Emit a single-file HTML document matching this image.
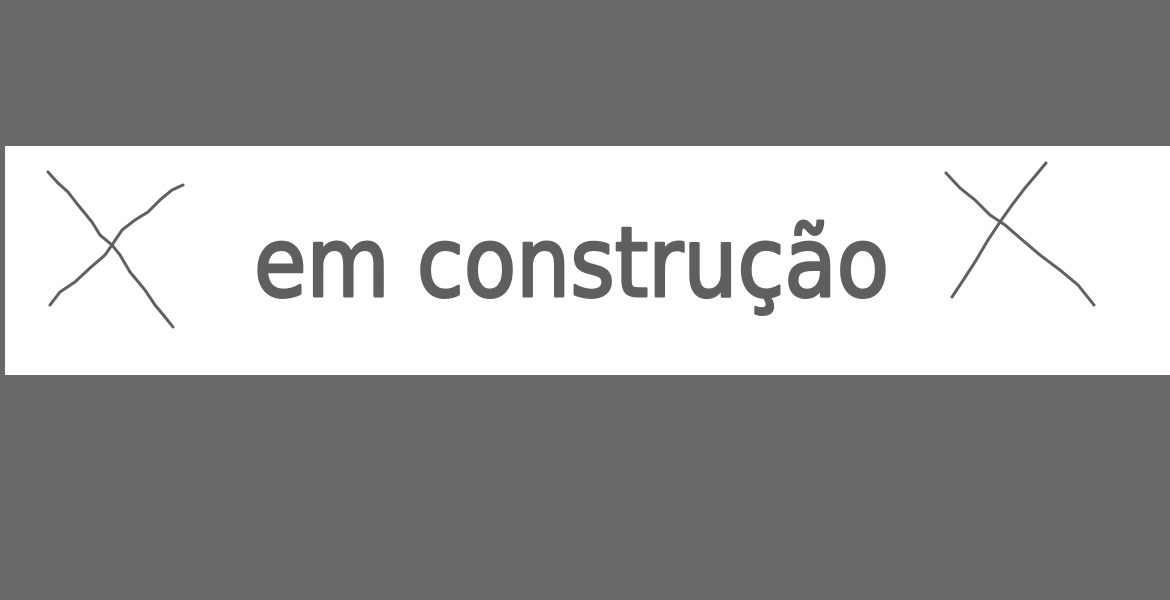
<!DOCTYPE html>
<html><head><style>
html,body{margin:0;padding:0;background:#686868;width:1170px;height:600px;overflow:hidden}
</style></head><body>
<svg width="1170" height="600" xmlns="http://www.w3.org/2000/svg" style="display:block">
<rect x="0" y="0" width="1170" height="600" fill="#686868"/>
<rect x="5" y="146" width="1165" height="229" fill="#ffffff"/>
<g stroke="#606060" stroke-width="3" fill="none" stroke-linecap="round">
<path d="M48 172 L58 183 L68 192 L78 205 L92 222 L100 235 L112 245 L120 255 L130 272 L145 290 L155 305 L165 317 L173 327"/>
<path d="M50 305 L60 292 L75 282 L90 268 L105 255 L112 245 L122 230 L135 220 L148 212 L160 200 L172 190 L183 185"/>
<path d="M946 173 L960 188 L975 200 L990 215 L1005 225 L1020 238 L1040 255 L1060 270 L1078 285 L1094 305"/>
<path d="M952 297 L962 282 L975 262 L988 240 L1000 222 L1012 205 L1025 188 L1036 175 L1046 163"/>
</g>
<text x="254" y="296" textLength="635" lengthAdjust="spacingAndGlyphs" font-family="'Comic Sans MS','DejaVu Sans','Liberation Sans',sans-serif" font-size="96" fill="#5f5f5f" stroke="#5f5f5f" stroke-width="3" stroke-linejoin="round">em construção</text>
</svg>
</body></html>
